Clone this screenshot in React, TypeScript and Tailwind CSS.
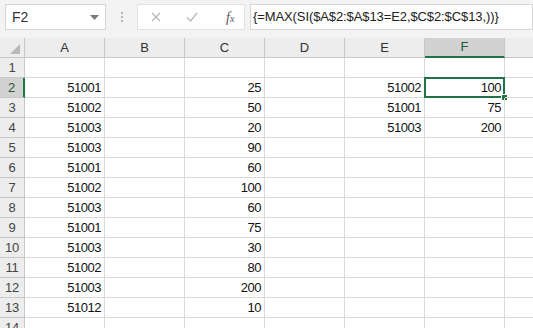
import React from "react";

const cols = ["A", "B", "C", "D", "E", "F", "G"];
const colW = [80, 80, 80, 80, 80, 80, 80];

const data: Record<number, Record<string, string>> = {
  2: { A: "51001", C: "25", E: "51002", F: "100" },
  3: { A: "51002", C: "50", E: "51001", F: "75" },
  4: { A: "51003", C: "20", E: "51003", F: "200" },
  5: { A: "51003", C: "90" },
  6: { A: "51001", C: "60" },
  7: { A: "51002", C: "100" },
  8: { A: "51003", C: "60" },
  9: { A: "51001", C: "75" },
  10: { A: "51003", C: "30" },
  11: { A: "51002", C: "80" },
  12: { A: "51003", C: "200" },
  13: { A: "51012", C: "10" },
  14: {},
};

const font = { fontFamily: '"Liberation Sans", Arial, sans-serif' };

export default function App() {
  const rows = Array.from({ length: 14 }, (_, i) => i + 1);
  return (
    <div className="w-[533px] h-[328px] overflow-hidden bg-white text-[#222]" style={font}>
      {/* toolbar */}
      <div className="h-[38px] bg-[#f3f3f3] flex items-start pt-[4px]">
        <div className="ml-[5px] w-[101px] h-[26px] shrink-0 bg-white border border-[#d6d6d6] flex items-center justify-between pl-[6px] pr-[6px]">
          <span className="text-[14px] text-[#333]">F2</span>
          <svg width="9" height="5" viewBox="0 0 9 5">
            <path d="M0 0 L9 0 L4.5 5 Z" fill="#7a7a7a" />
          </svg>
        </div>
        <div className="w-[31px] h-[26px] shrink-0 flex flex-col items-center justify-center gap-[2px]">
          <div className="w-[2px] h-[2px] bg-[#b5b5b5]" />
          <div className="w-[2px] h-[2px] bg-[#b5b5b5]" />
          <div className="w-[2px] h-[2px] bg-[#b5b5b5]" />
        </div>
        <div className="w-[108px] h-[26px] shrink-0 bg-white border border-[#e2e2e2] flex items-center">
          <svg width="10" height="10" viewBox="0 0 10 10" className="ml-[13px]">
            <path d="M1 1 L9 9 M9 1 L1 9" stroke="#b8b8b8" strokeWidth="1.2" />
          </svg>
          <svg width="12" height="10" viewBox="0 0 12 10" className="ml-[25px]">
            <path d="M1 5.5 L4.5 9 L11 1" stroke="#b8b8b8" strokeWidth="1.3" fill="none" />
          </svg>
          <span
            className="ml-[28px] text-[14px] italic text-[#555]"
            style={{ fontFamily: '"Liberation Serif", serif' }}
          >
            f<span className="text-[10px]">x</span>
          </span>
        </div>
        <div className="ml-[5px] flex-1 h-[26px] bg-white border border-[#d6d6d6] flex items-center pl-[2px]">
          <span className="text-[13px] text-[#222] whitespace-nowrap tracking-[-0.1px]">
            {"{=MAX(SI($A$2:$A$13=E2,$C$2:$C$13,))}"}
          </span>
        </div>
      </div>
      {/* column headers */}
      <div className="flex h-[20px] bg-[#ededed]">
        <div className="w-[25px] h-[20px] shrink-0 border-r border-b border-[#c8c8c8] relative">
          <svg width="10" height="10" viewBox="0 0 10 10" className="absolute right-[4px] bottom-[3px]">
            <path d="M10 0 L10 10 L0 10 Z" fill="#b8b8b8" />
          </svg>
        </div>
        {cols.map((c, i) => (
          <div
            key={c}
            style={{ width: colW[i] }}
            className={
              c === "F"
                ? "h-[20px] shrink-0 flex items-center justify-center text-[13px] border-r border-[#c8c8c8] border-b-2 border-b-[#217346] bg-[#d2d2d2] text-[#1e5b3a]"
                : "h-[20px] shrink-0 flex items-center justify-center text-[13px] border-r border-b border-[#c8c8c8] text-[#333]"
            }
          >
            {c === "G" ? "" : c}
          </div>
        ))}
      </div>
      {/* rows */}
      {rows.map((r) => (
        <div key={r} className="flex h-[20px]">
          <div
            className={
              r === 2
                ? "w-[25px] h-[20px] shrink-0 flex items-center justify-center text-[13px] tracking-[-0.3px] bg-[#d2d2d2] border-r-2 border-r-[#217346] border-b border-b-[#c8c8c8] text-[#1e5b3a]"
                : "w-[25px] h-[20px] shrink-0 flex items-center justify-center text-[13px] tracking-[-0.3px] bg-[#ededed] border-r border-b border-[#c8c8c8] text-[#444]"
            }
          >
            {r}
          </div>
          {cols.map((c, i) => (
            <div
              key={c}
              style={{ width: colW[i] }}
              className="relative h-[20px] shrink-0 border-r border-b border-[#d9d9d9] flex items-center justify-end pr-[3px] text-[13px] tracking-[-0.5px] text-[#111]"
            >
              {data[r]?.[c] ?? ""}
              {r === 2 && c === "F" && (
                <>
                  <div className="absolute left-[-1px] top-[-1px] w-[81px] h-[21px] border-2 border-[#217346] pointer-events-none" />
                  <div className="absolute right-[-4px] bottom-[-4px] w-[7px] h-[7px] bg-[#217346] border border-white" />
                </>
              )}
            </div>
          ))}
        </div>
      ))}
    </div>
  );
}
